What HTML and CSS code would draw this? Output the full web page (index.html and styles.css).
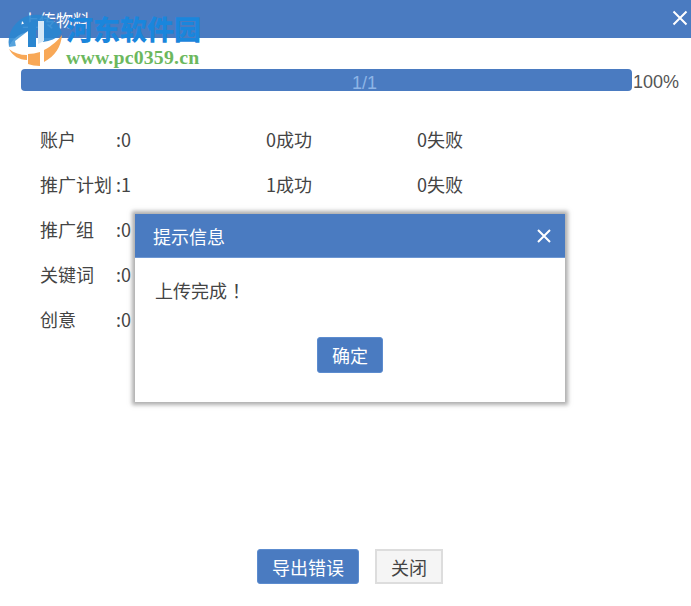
FILE: index.html
```html
<!DOCTYPE html>
<html lang="zh">
<head>
<meta charset="utf-8">
<title>上传物料</title>
<link rel="stylesheet" href="styles.css">
</head>
<body>
<div class="window">
  <header class="titlebar">
    <span class="title">上传物料</span>
    <svg class="close-icon" width="16" height="16" viewBox="0 0 16 16"><path d="M1.5 1.5L14.5 14.5M14.5 1.5L1.5 14.5" stroke="#fff" stroke-width="2" fill="none"/></svg>
  </header>
  <div class="progress-row">
    <div class="progress"><span>1/1</span></div>
    <span class="percent">100%</span>
  </div>
  <div class="stats">
    <span>账户</span><span>:0</span><span>0成功</span><span>0失败</span>
    <span>推广计划</span><span>:1</span><span>1成功</span><span>0失败</span>
    <span>推广组</span><span>:0</span><span></span><span></span>
    <span>关键词</span><span>:0</span><span></span><span></span>
    <span>创意</span><span>:0</span><span></span><span></span>
  </div>
  <footer class="actions">
    <button class="btn primary wide">导出错误</button>
    <button class="btn plain">关闭</button>
  </footer>
</div>

<div class="dialog">
  <div class="dialog-head">
    <span>提示信息</span>
    <svg width="16" height="16" viewBox="0 0 16 16"><path d="M2 2L14 14M14 2L2 14" stroke="#fff" stroke-width="2" fill="none"/></svg>
  </div>
  <p class="dialog-msg">上传完成<span class="mark">！</span></p>
  <div class="dialog-foot"><button class="btn primary small">确定</button></div>
</div>

<div class="watermark">
  <svg class="wm-logo" width="70" height="70" viewBox="0 0 70 70">
    <path d="M9 47A27.5 27.5 0 0 1 62 33C56 39 50 41 43 42L43 30C30 29 16 34 9 47Z" fill="#2a86d0" opacity=".9"/>
    <path d="M9 47C12 39 19 34 27 32L16 42L16 46Z" fill="#56a3dd"/>
    <path d="M28 31L15 41L16 47L28 47Z" fill="#fff"/>
    <path d="M28 23L36 20L36 47L28 47Z" fill="#2a86d0"/>
    <path d="M38 21L44 21L44 41L38 44Z" fill="#d6e8f7"/>
    <path d="M9 49C14 53 20 55 27 55L27 60C19 60 13 56 9 49Z" fill="#f8a857"/>
    <path d="M28 54C32 54 36 53 40 52L40 66C36 66 31 65 28 64Z" fill="#f8a857"/>
    <path d="M44 50C52 46 58 40 62 35C61 47 55 56 44 62Z" fill="#f8a857"/>
    <path d="M22 21L24 23.500L21.500 24.500Z" fill="#fff"/>
  </svg>
  <div class="wm-cn">河东软件园</div>
  <div class="wm-url">www.pc0359.cn</div>
</div>
</body>
</html>
```
FILE: styles.css
```css
* { box-sizing: border-box; }
html, body { margin: 0; padding: 0; }
body {
  width: 691px;
  height: 606px;
  overflow: hidden;
  background: #fff;
  position: relative;
  font-family: "Noto Sans CJK SC", "Liberation Sans", sans-serif;
  font-size: 18px;
  color: #444;
}
.window { height: 606px; display: flex; flex-direction: column; }
.titlebar {
  height: 38px;
  flex: none;
  background: #4a7bc1;
  color: #fff;
  display: flex;
  align-items: center;
  justify-content: space-between;
  padding: 0 3px 0 22px;
}
.title { font-size: 17px; }
.close-icon { margin-top: -3px; }
.progress-row {
  display: flex;
  align-items: flex-start;
  margin: 31px 0 0 21px;
}
.progress {
  width: 611px;
  height: 22px;
  background: #4a7bc1;
  border-radius: 4px;
  color: #8db4e6;
  text-align: center;
  line-height: 28px;
  padding-left: 76px;
  font-family: "Liberation Sans", sans-serif;
  font-size: 18px;
}
.percent {
  margin-left: 1px;
  font-family: "Liberation Sans", sans-serif;
  font-size: 18px;
  line-height: 26px;
  color: #555;
}
.stats {
  display: grid;
  grid-template-columns: 76px 150px 151px 100px;
  grid-auto-rows: 45px;
  margin: 22px 0 0 40px;
  line-height: 45px;
  white-space: nowrap;
}
.actions {
  margin-top: auto;
  margin-bottom: 22px;
  display: flex;
  justify-content: flex-start;
  gap: 16px;
  padding-left: 257px;
}
.btn {
  font-family: "Noto Sans CJK SC", sans-serif;
  font-size: 18px;
  height: 35px;
  padding: 0;
  border-radius: 3px;
  cursor: pointer;
}
.primary { background: #4a7bc1; color: #fff; border: 1px solid #5c8ccf; }
.wide { width: 102px; }
.plain { width: 68px; background: #f5f5f5; color: #444; border: 2px solid #ddd; border-radius: 0; }
.small { width: 66px; height: 36px; }
.dialog {
  position: absolute;
  left: 135px;
  top: 214px;
  width: 430px;
  height: 188px;
  background: #fff;
  box-shadow: 0 0 4px 3px rgba(120, 120, 120, .6);
}
.dialog-head {
  height: 44px;
  background: #4a7bc1;
  color: #fff;
  display: flex;
  align-items: center;
  justify-content: space-between;
  padding: 0 13px 0 18px;
  font-size: 18px;
  border-bottom: 1px solid #6d97d3;
}
.dialog-msg { margin: 0; padding: 19px 0 0 20px; line-height: 26px; font-size: 18px; height: 79px; }
.mark { margin-left: 5px; }
.dialog-foot { display: flex; justify-content: center; }
.watermark {
  position: absolute;
  left: 0;
  top: 0;
  width: 230px;
  height: 72px;
  pointer-events: none;
}
.wm-logo { position: absolute; left: 0; top: 0; }
.wm-cn {
  position: absolute;
  left: 66px;
  top: 10px;
  font-family: "Noto Sans CJK SC", sans-serif;
  font-weight: 900;
  font-size: 27px;
  line-height: 38px;
  color: #1a86dc;
  white-space: nowrap;
}
.wm-url {
  position: absolute;
  left: 66px;
  top: 46px;
  font-family: "Liberation Serif", serif;
  font-weight: 700;
  font-size: 19.8px;
  line-height: 22px;
  letter-spacing: .2px;
  color: #6cb85e;
  white-space: nowrap;
}
```
